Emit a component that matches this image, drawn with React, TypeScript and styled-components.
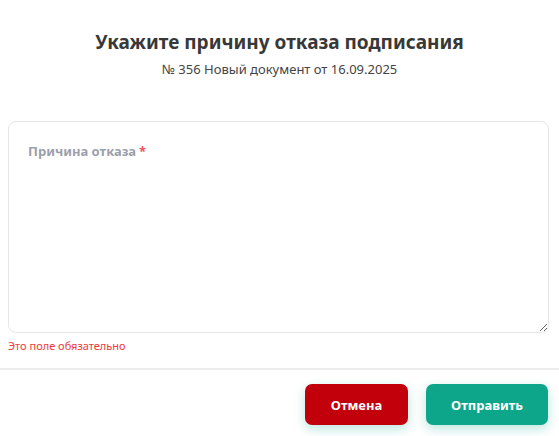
import { createGlobalStyle } from 'styled-components';
import styled from 'styled-components';

const Global = createGlobalStyle`
    html, body { margin: 0; padding: 0; background: #fff; }
    body { font-family: "Noto Sans", "Open Sans", sans-serif; }
`;

const Dialog = styled.div`
    width: 559px;
    height: 436px;
    display: flex;
    flex-direction: column;
    overflow: hidden;
`;

const Header = styled.div`
    display: flex;
    flex-direction: column;
    align-items: center;
    padding-top: 29px;
`;

const Title = styled.h2`
    margin: 0;
    font-size: 19px;
    line-height: 26px;
    font-weight: 700;
    color: #383838;
`;

const SubTitle = styled.div`
    margin-top: 5px;
    font-size: 13px;
    line-height: 18px;
    color: #444;
`;

const Body = styled.div`
    padding: 0 10px 0 8px;
    margin-top: 43px;
`;

const Field = styled.label`
    position: relative;
    display: block;
`;

const FieldLabel = styled.span`
    position: absolute;
    left: 20px;
    top: 21px;
    font-size: 13px;
    font-weight: 700;
    color: #9c9fab;
    pointer-events: none;
    span { color: #f2545b; margin-left: 3px; }
`;

const TextArea = styled.textarea`
    display: block;
    box-sizing: border-box;
    width: 100%;
    height: 212px;
    border: 1px solid #e6e6e9;
    border-radius: 8px;
    padding: 44px 20px 12px;
    font: inherit;
    font-size: 13px;
    outline: none;
    resize: vertical;
`;

const ErrorText = styled.div`
    margin-top: 6px;
    font-size: 11px;
    line-height: 14px;
    color: #f23a3a;
`;

const Divider = styled.hr`
    margin: 15px 0 0;
    border: 0;
    border-top: 2px solid #ececec;
`;

const Footer = styled.div`
    display: flex;
    justify-content: flex-end;
    gap: 18px;
    padding: 14px 11px 0 0;
`;

const Button = styled.button<{ $tone: 'danger' | 'primary'; $width: number }>`
    width: ${(p) => p.$width}px;
    height: 41px;
    border: 0;
    border-radius: 7px;
    font-family: inherit;
    font-size: 13px;
    font-weight: 700;
    color: #fff;
    cursor: pointer;
    background: ${(p) => (p.$tone === 'danger' ? '#c2000b' : '#0ea68a')};
    box-shadow: 0 4px 12px rgba(14, 166, 138, 0.28);
`;

export default function App() {
    return (
        <Dialog>
            <Global />
            <Header>
                <Title>Укажите причину отказа подписания</Title>
                <SubTitle>№ 356 Новый документ от 16.09.2025</SubTitle>
            </Header>
            <Body>
                <Field>
                    <FieldLabel>Причина отказа<span>*</span></FieldLabel>
                    <TextArea />
                </Field>
                <ErrorText>Это поле обязательно</ErrorText>
            </Body>
            <Divider />
            <Footer>
                <Button $tone="danger" $width={103}>Отмена</Button>
                <Button $tone="primary" $width={122}>Отправить</Button>
            </Footer>
        </Dialog>
    );
}
